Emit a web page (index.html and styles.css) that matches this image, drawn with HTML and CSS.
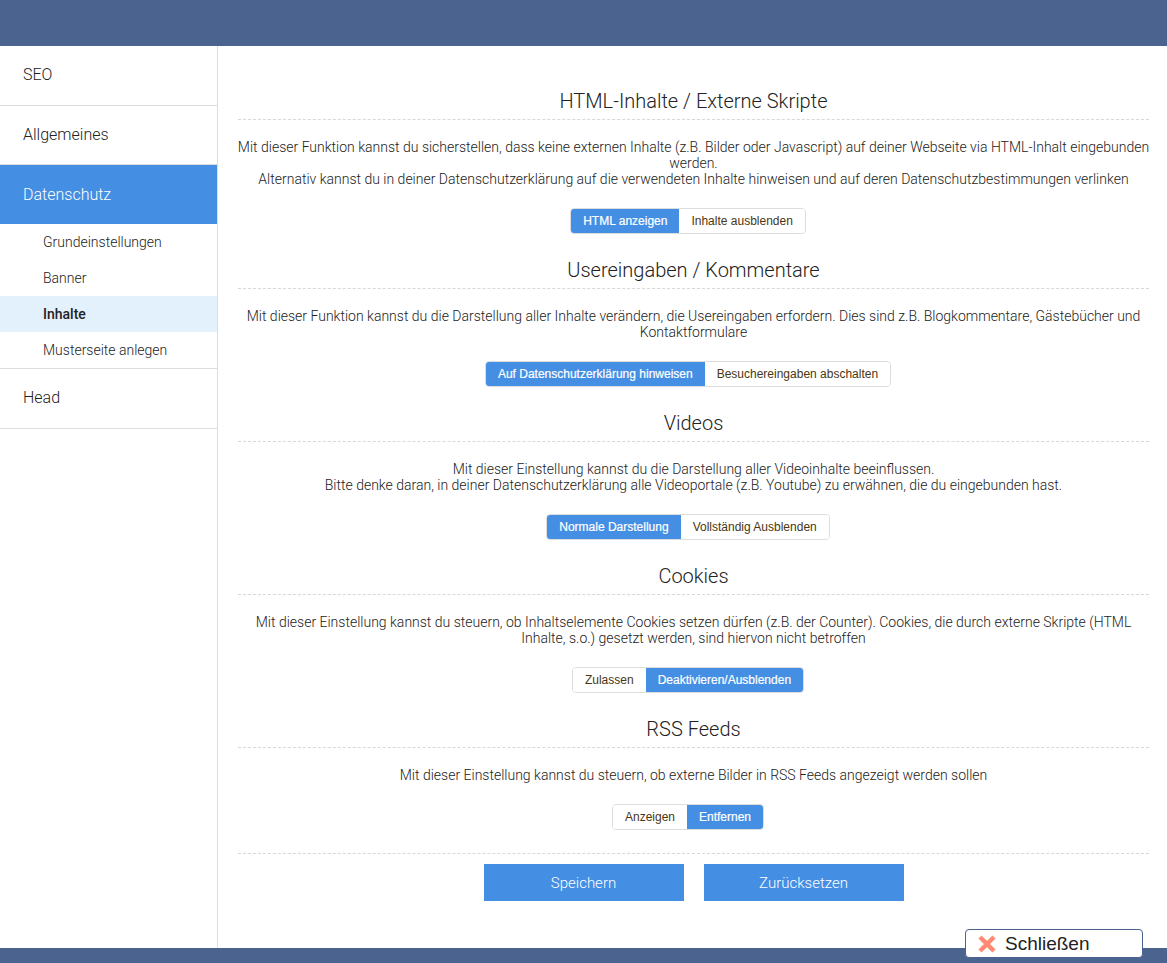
FILE: index.html
```html
<!DOCTYPE html>
<html lang="de">
<head>
    <meta charset="UTF-8">
    <meta name="viewport" content="width=device-width, initial-scale=1.0">
    <title>Datenschutz - Inhalte</title>
    <link rel="stylesheet" href="styles.css">
</head>
<body>

    <div class="topbar"></div>

    <div class="layout">
        <!-- Navigation links -->
        <nav class="sidebar">
            <a class="nav-item" href="#">SEO</a>
            <a class="nav-item" href="#">Allgemeines</a>
            <div class="nav-group">
                <a class="nav-item active" href="#">Datenschutz</a>
                <ul class="subnav">
                    <li><a href="#">Grundeinstellungen</a></li>
                    <li><a href="#">Banner</a></li>
                    <li class="current"><a href="#">Inhalte</a></li>
                    <li><a href="#">Musterseite anlegen</a></li>
                </ul>
            </div>
            <a class="nav-item" href="#">Head</a>
        </nav>

        <!-- Einstellungen -->
        <main class="content">
            <section class="setting">
                <h2>HTML-Inhalte / Externe Skripte</h2>
                <p>Mit dieser Funktion kannst du sicherstellen, dass keine externen Inhalte (z.B. Bilder oder Javascript) auf deiner Webseite via HTML-Inhalt eingebunden werden.<br>Alternativ kannst du in deiner Datenschutzerklärung auf die verwendeten Inhalte hinweisen und auf deren Datenschutzbestimmungen verlinken</p>
                <div class="toggle">
                    <button class="on">HTML anzeigen</button><button>Inhalte ausblenden</button>
                </div>
            </section>

            <section class="setting">
                <h2>Usereingaben / Kommentare</h2>
                <p>Mit dieser Funktion kannst du die Darstellung aller Inhalte verändern, die Usereingaben erfordern. Dies sind z.B. Blogkommentare, Gästebücher und Kontaktformulare</p>
                <div class="toggle">
                    <button class="on">Auf Datenschutzerklärung hinweisen</button><button>Besuchereingaben abschalten</button>
                </div>
            </section>

            <section class="setting">
                <h2>Videos</h2>
                <p>Mit dieser Einstellung kannst du die Darstellung aller Videoinhalte beeinflussen.<br>Bitte denke daran, in deiner Datenschutzerklärung alle Videoportale (z.B. Youtube) zu erwähnen, die du eingebunden hast.</p>
                <div class="toggle">
                    <button class="on">Normale Darstellung</button><button>Vollständig Ausblenden</button>
                </div>
            </section>

            <section class="setting">
                <h2>Cookies</h2>
                <p>Mit dieser Einstellung kannst du steuern, ob Inhaltselemente Cookies setzen dürfen (z.B. der Counter). Cookies, die durch externe Skripte (HTML Inhalte, s.o.) gesetzt werden, sind hiervon nicht betroffen</p>
                <div class="toggle">
                    <button>Zulassen</button><button class="on">Deaktivieren/Ausblenden</button>
                </div>
            </section>

            <section class="setting">
                <h2>RSS Feeds</h2>
                <p>Mit dieser Einstellung kannst du steuern, ob externe Bilder in RSS Feeds angezeigt werden sollen</p>
                <div class="toggle">
                    <button>Anzeigen</button><button class="on">Entfernen</button>
                </div>
            </section>

            <div class="actions">
                <button class="btn">Speichern</button>
                <button class="btn">Zurücksetzen</button>
            </div>
        </main>
    </div>

    <div class="bottombar"></div>

    <!-- Fenster schliessen -->
    <button class="close-btn">
        <svg width="20" height="20" viewBox="0 0 20 20">
            <path d="M3 3 L17 17 M17 3 L3 17" stroke="#ff8b72" stroke-width="4.5" fill="none"/>
        </svg>
        Schließen
    </button>

</body>
</html>
```

FILE: styles.css
```css
/* Grundlayout */
html, body {
    height: 100%;
}

body {
    margin: 0;
    font-family: Roboto, "Liberation Sans", sans-serif;
    color: #222;
    background: #fff;
    display: flex;
    flex-direction: column;
    overflow: hidden;
}

.topbar {
    height: 46px;
    flex-shrink: 0;
    background-color: #4b638f;
}

.bottombar {
    height: 15px;
    flex-shrink: 0;
    background-color: #4b638f;
}

.layout {
    flex: 1;
    display: flex;
    min-height: 0;
}

/* Seitenleiste */
.sidebar {
    width: 217px;
    flex-shrink: 0;
    border-right: 1px solid #ddd;
}

.nav-item {
    display: block;
    height: 58.5px;
    line-height: 58.5px;
    padding-left: 23px;
    font-size: 16px;
    font-weight: 300;
    color: #222;
    text-decoration: none;
    border-bottom: 1px solid #ddd;
}

.nav-item.active {
    background-color: #448ee4;
    color: #fff;
    border-bottom: none;
    height: 59px;
    line-height: 59px;
}

.nav-group .nav-item {
    border-bottom: none;
}

.subnav {
    list-style: none;
    margin: 0;
    padding: 0;
    border-bottom: 1px solid #ddd;
}

.subnav a {
    display: block;
    height: 36px;
    line-height: 36px;
    padding-left: 43px;
    font-size: 14px;
    font-weight: 300;
    color: #222;
    text-decoration: none;
}

.subnav .current a {
    background-color: #e3f1fc;
    font-weight: 500;
}

/* Inhalt */
.content {
    flex: 1;
    padding: 43px 18px 0 20px;
    text-align: center;
}

.setting {
    margin-bottom: 24px;
}

.setting h2 {
    margin: 0;
    font-size: 20px;
    font-weight: 300;
    line-height: 24px;
    color: #222;
    padding-bottom: 6px;
    border-bottom: 1px dashed #d8d8d8;
}

.setting p {
    margin: 19px -2px 21px;
    font-size: 14px;
    font-weight: 300;
    line-height: 16px;
    color: #222;
}

/* Umschalter */
.toggle {
    display: inline-flex;
    margin-right: 11px;
    border: 1px solid #ddd;
    border-radius: 4px;
    overflow: hidden;
}

.toggle button {
    height: 24px;
    padding: 0 12px;
    border: none;
    background: #fff;
    font-family: "Liberation Sans", Arial, sans-serif;
    font-size: 12px;
    color: #4a3612;
    cursor: pointer;
}

.toggle button.on {
    background-color: #448ee4;
    color: #fff;
    -webkit-text-stroke: 0.2px #fff;
}

/* Speichern / Zuruecksetzen */
.actions {
    margin-top: -1px;
    border-top: 1px dashed #d8d8d8;
    padding-top: 10px;
    display: flex;
    justify-content: center;
    gap: 20px;
}

.btn {
    width: 200px;
    height: 37px;
    border: none;
    background-color: #448ee4;
    color: #fff;
    font-family: Roboto, "Liberation Sans", sans-serif;
    font-size: 15px;
    font-weight: 300;
    cursor: pointer;
}

.close-btn {
    position: absolute;
    left: 965px;
    top: 929px;
    width: 178px;
    height: 29px;
    display: flex;
    align-items: center;
    gap: 8px;
    padding: 0 0 0 11px;
    background: #fff;
    border: 1px solid #4b638f;
    border-radius: 4px;
    font-family: "Liberation Sans", Arial, sans-serif;
    font-size: 19px;
    color: #222;
    cursor: pointer;
}
```
